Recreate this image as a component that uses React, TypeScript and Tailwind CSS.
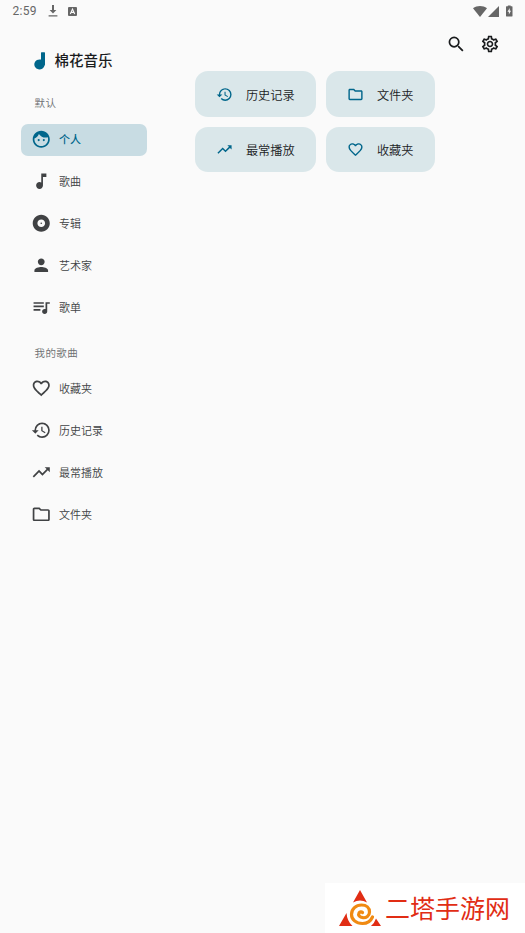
import clsx from "clsx";
import type { IconType } from "react-icons";
import {
    MdAlbum,
    MdFace,
    MdFavoriteBorder,
    MdHistory,
    MdMusicNote,
    MdOutlineFolder,
    MdOutlineSettings,
    MdPerson,
    MdQueueMusic,
    MdSearch,
    MdTrendingUp,
} from "react-icons/md";

type Item = { label: string; icon: IconType };

const defaults: Item[] = [
    { label: "个人", icon: MdFace },
    { label: "歌曲", icon: MdMusicNote },
    { label: "专辑", icon: MdAlbum },
    { label: "艺术家", icon: MdPerson },
    { label: "歌单", icon: MdQueueMusic },
];

const mySongs: Item[] = [
    { label: "收藏夹", icon: MdFavoriteBorder },
    { label: "历史记录", icon: MdHistory },
    { label: "最常播放", icon: MdTrendingUp },
    { label: "文件夹", icon: MdOutlineFolder },
];

const shortcuts: Item[] = [
    { label: "历史记录", icon: MdHistory },
    { label: "文件夹", icon: MdOutlineFolder },
    { label: "最常播放", icon: MdTrendingUp },
    { label: "收藏夹", icon: MdFavoriteBorder },
];

const StatusBar = () => {
    return (
        <div className="flex h-[22px] shrink-0 items-center justify-between pr-[12.5px] pl-[12.5px] text-[#666666]">
            <div className="flex items-center">
                <p className="w-[35.5px] font-['Roboto'] text-[12px] leading-none tracking-[0.3px]">2:59</p>
                <svg className="h-[12px] w-[10px]" viewBox="0 0 10 12" fill="currentColor">
                    <path d="M4 0h2v5h2.4L5 8.6 1.6 5H4zM.6 10.2h8.8v1.2H.6z" />
                </svg>
                <svg className="ml-[10px] h-[9px] w-[9px]" viewBox="0 0 9 9">
                    <rect width="9" height="9" rx="1" fill="currentColor" />
                    <path d="M2.3 7 4.5 2 6.7 7M3.2 5.4h2.6" fill="none" stroke="#fafafa" strokeWidth="1.1" />
                </svg>
            </div>
            <div className="flex items-center">
                <svg className="h-[11px] w-[14px]" viewBox="0 0 14 11" fill="currentColor">
                    <path d="M0 2.3C4-.7 10-.7 14 2.3L7 11z" />
                </svg>
                <svg className="ml-[1px] h-[11px] w-[11px]" viewBox="0 0 11 11" fill="currentColor">
                    <path d="M11 0v11H0z" />
                </svg>
                <svg className="ml-[7px] h-[12px] w-[6.5px]" viewBox="0 0 7 12">
                    <path d="M2 0h3v1h1.5q.5 0 .5.5v10q0 .5-.5.5h-6q-.5 0-.5-.5v-10Q0 1 .5 1H2z" fill="currentColor" />
                    <path d="M4 2.8 1.6 6.9h1.5v3l2.3-4.1H4z" fill="#fafafa" />
                </svg>
            </div>
        </div>
    );
};

const Brand = () => {
    return (
        <div className="flex h-[24px] items-center pl-[12.5px]">
            <svg className="h-[18px] w-[11px]" viewBox="0 0 11 18" fill="#00668b">
                <path d="M7 .8Q7 .2 7.600 .2H10.400Q11 .2 11 .8v11.600q0 .6-.4 1.100a5.200 5 0 1 1-3.600-5.900z" />
            </svg>
            <p className="ml-[10px] text-[14.5px] leading-none font-medium whitespace-nowrap text-[#1a1c1e]">棉花音乐</p>
        </div>
    );
};

const NavItem = ({ item, active }: { item: Item; active?: boolean }) => {
    const Icon = item.icon;
    return (
        <button
            className={clsx(
                "flex h-[32px] w-full items-center rounded-[7px] pl-[10px]",
                active ? "bg-[#c8dce3] font-medium text-[#00668b]" : "font-[350] text-[#404244]"
            )}
        >
            <Icon className="size-[20.5px] shrink-0" />
            <span className="ml-[7.5px] text-[11px] leading-none">{item.label}</span>
        </button>
    );
};

const NavGroup = ({ title, items, activeIndex }: { title: string; items: Item[]; activeIndex?: number }) => {
    return (
        <div>
            <p className="h-[16px] pl-[13.5px] text-[10.5px] leading-[16px] font-[350] tracking-[0.4px] text-[#6b6d70]">{title}</p>
            <div className={clsx("flex flex-col gap-[10px]", activeIndex === undefined ? "mt-[11px]" : "mt-[13px]")}>
                {items.map((item, index) => (
                    <NavItem key={item.label} item={item} active={index === activeIndex} />
                ))}
            </div>
        </div>
    );
};

const Sidebar = () => {
    return (
        <nav className="flex w-[147px] shrink-0 flex-col pt-[26.5px] pl-[21px]">
            <Brand />
            <div className="mt-[22px] flex flex-col gap-[21.5px]">
                <NavGroup title="默认" items={defaults} activeIndex={0} />
                <NavGroup title="我的歌曲" items={mySongs} />
            </div>
        </nav>
    );
};

const Shortcut = ({ item }: { item: Item }) => {
    const Icon = item.icon;
    return (
        <button className="flex h-[45.5px] items-center rounded-[13px] bg-[#dae7ea] pl-[21px] text-[#1a1c1e]">
            <Icon className="size-[17px] shrink-0 text-[#00668b]" />
            <span className="mt-[1px] ml-[12.5px] text-[12.2px] leading-none font-[350]">{item.label}</span>
        </button>
    );
};

const Content = () => {
    return (
        <main className="ml-[48.4px] flex-1">
            <div className="flex h-[49.4px] items-start justify-end gap-[14px] pt-[12px] pr-[25px] text-[#1a1c1e]">
                <MdSearch className="size-[20.5px]" />
                <MdOutlineSettings className="size-[20px]" />
            </div>
            <div className="grid grid-cols-[121px_109px] gap-[10px]">
                {shortcuts.map((item) => (
                    <Shortcut key={item.label} item={item} />
                ))}
            </div>
        </main>
    );
};

const Watermark = () => {
    return (
        <div className="absolute right-0 bottom-0 flex h-[50px] w-[200px] items-center bg-white pl-[14px]">
            <svg className="h-[38px] w-[42px] shrink-0" viewBox="0 0 42 38">
                <path d="M21 1l7 12.500q-7-4-14 0zM7.500 24q.5 8 6 13H0zM42 37H32q3.500-3 5-7.500z" fill="#e12d14" />
                <path
                    d="M33.500 28C31.500 32.500 28 34.500 23.500 34.500C17 34.500 12.500 30.500 12.500 25.500C12.500 20 17 16 22.500 16C27.500 16 30.500 19 30.500 23C30.500 27 27 29 24 28.700C20.500 28.500 18.800 26 20 24C20.800 22.800 22.500 22.500 23.500 23.500"
                    fill="none"
                    stroke="#f08a12"
                    strokeWidth="3.2"
                    strokeLinecap="round"
                />
            </svg>
            <p className="mb-[2px] ml-[4px] text-[25px] leading-none whitespace-nowrap text-[#e12d14]">二塔手游网</p>
        </div>
    );
};

export default function App() {
    return (
        <div className="relative flex h-screen w-full flex-col overflow-hidden bg-[#fafafa] font-['Noto_Sans_CJK_SC',sans-serif]">
            <StatusBar />
            <div className="flex flex-1">
                <Sidebar />
                <Content />
            </div>
            <Watermark />
        </div>
    );
}
